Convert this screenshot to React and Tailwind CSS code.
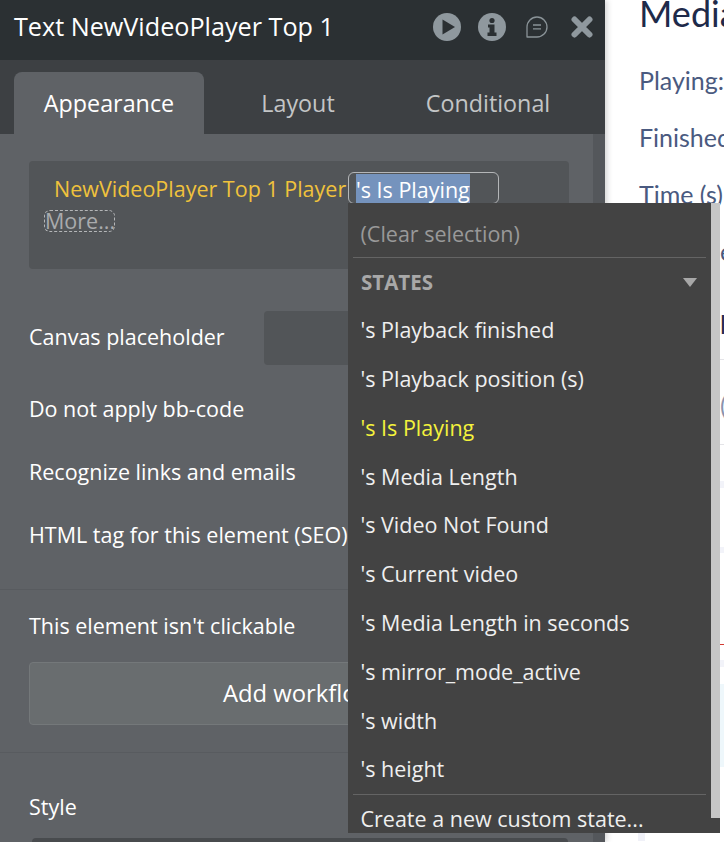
import React from "react";

const STATES = [
  "'s Playback finished",
  "'s Playback position (s)",
  "'s Is Playing",
  "'s Media Length",
  "'s Video Not Found",
  "'s Current video",
  "'s Media Length in seconds",
  "'s mirror_mode_active",
  "'s width",
  "'s height",
];

function HeaderIcons() {
  return (
    <div className="flex items-center">
      {/* play */}
      <svg width="28" height="28" viewBox="0 0 28 28">
        <circle cx="14" cy="14" r="14" fill="#8f989e" />
        <path d="M9.5 6.5 L22 14 L9.5 21.5 Z" fill="#2b3033" />
      </svg>
      {/* info */}
      <svg width="28" height="28" viewBox="0 0 28 28" className="ml-[17px]">
        <circle cx="14" cy="14" r="14" fill="#8f989e" />
        <circle cx="14" cy="7.5" r="2.6" fill="#2b3033" />
        <path d="M10 11.5 H16.5 V19.5 H18.5 V23 H9.5 V19.5 H11.5 V14.5 H10 Z" fill="#2b3033" />
      </svg>
      {/* comment */}
      <svg width="22" height="22" viewBox="0 0 22 22" className="ml-[20px]" fill="none">
        <path
          d="M1 21 V11 A10 10 0 1 1 11 21 Z"
          stroke="#8a9398"
          strokeWidth="1.3"
          strokeLinejoin="round"
        />
        <path d="M7 9 H15 M7 12.8 H15" stroke="#8a9398" strokeWidth="1.3" />
      </svg>
      {/* close */}
      <svg width="22" height="22" viewBox="0 0 22 22" className="ml-[23px]">
        <path d="M3.5 3.5 L18.5 18.5 M18.5 3.5 L3.5 18.5" stroke="#8f989e" strokeWidth="6" strokeLinecap="round" />
      </svg>
    </div>
  );
}

function Row({ label }) {
  return <div className="h-[63px] flex items-center pl-[29px] text-white whitespace-nowrap">{label}</div>;
}

function Panel() {
  return (
    <div className="relative z-10 w-[605px] h-[842px] shrink-0 flex flex-col bg-[#5f6266] shadow-[2px_0_6px_rgba(0,0,0,0.18)] overflow-hidden">
      {/* HEADER */}
      <div className="h-[60px] shrink-0 bg-[#2b3033] flex items-center justify-between pl-[14px] pr-[12px] pb-[6px]">
        <div className="text-[25.2px] text-white whitespace-nowrap">Text NewVideoPlayer Top 1</div>
        <HeaderIcons />
      </div>

      {/* TABS */}
      <div className="h-[74px] shrink-0 bg-[#3d4043] flex items-end pl-[14px] text-[23.3px]">
        <div className="w-[190px] h-[62px] bg-[#5f6266] rounded-t-lg flex items-center justify-center text-white">
          Appearance
        </div>
        <div className="w-[188px] h-[62px] flex items-center justify-center text-[#c3c5c6]">Layout</div>
        <div className="w-[192px] h-[62px] flex items-center justify-center text-[#c3c5c6]">Conditional</div>
      </div>

      {/* BODY */}
      <div className="flex-1 flex min-h-0">
        <div className="w-[593px] shrink-0 pt-[27px]">
          <div className="ml-[29px] w-[540px] h-[108px] bg-[#525558] rounded-sm pl-[15px] pt-[11px]">
            <div className="flex h-[32px]">
              <span className="w-[304px] pl-[10px] text-[#f0c23c] leading-[34px] whitespace-nowrap">
                NewVideoPlayer Top 1 Player
              </span>
              <div className="w-[151px] h-[32px] border border-[#b4b6b8] rounded-md pl-[7px] pt-[1px]">
                <span className="block w-[114px] h-[30px] bg-[#7593bd] text-white leading-[32px] whitespace-nowrap">
                  's Is Playing
                </span>
              </div>
            </div>
            <div className="mt-[6px] w-[71px] h-[22px] border border-dashed border-[#b4b6b8] rounded-md text-[#a9abad] leading-[20px] whitespace-nowrap">
              More...
            </div>
          </div>

          <div className="mt-[42px] h-[54px] flex items-center pl-[29px] text-white">
            <span className="w-[235px] pb-[2px] whitespace-nowrap">Canvas placeholder</span>
            <div className="w-[305px] h-[54px] bg-[#525558] rounded-sm" />
          </div>

          <div className="mt-[13px]">
            <Row label="Do not apply bb-code" />
            <Row label="Recognize links and emails" />
            <Row label="HTML tag for this element (SEO)" />
          </div>
        </div>
        <div className="w-[12px] shrink-0 bg-[#54575b]" />
      </div>
    </div>
  );
}

function LowerPanel() {
  return (
    <div className="absolute left-0 top-[589px] z-10 w-[593px] h-[253px] overflow-hidden">
      <div className="h-px bg-[#585b5f]" />
      <div className="mt-[18px] h-[36px] flex items-center pl-[29px] text-white whitespace-nowrap">
        This element isn't clickable
      </div>
      <div className="mt-[18px] ml-[29px] w-[540px] h-[63px] bg-[#696d6f] border border-[#74787a] rounded-sm flex items-center justify-center text-[23.8px] text-white whitespace-nowrap">
        Add workflow
      </div>
      <div className="mt-[27px] h-px bg-[#585b5f]" />
      <div className="mt-[36px] h-[36px] flex items-center pl-[29px] text-white">Style</div>
      <div className="mt-[13px] ml-[32px] w-[536px] h-[10px] bg-[#484b4e] rounded-t-sm" />
    </div>
  );
}

function Dropdown() {
  return (
    <div className="absolute left-[348px] top-[203px] z-20 w-[372px] h-[630px] bg-[#434343] overflow-hidden">
      <div className="w-[363px] pl-[5px] pr-[5px]">
        <div className="h-[54px] pl-[7.5px] pt-[8px] flex items-center text-[#999999] whitespace-nowrap">(Clear selection)</div>
        <div className="h-px bg-[#646464]" />
        <div className="h-[48px] pl-[8px] pr-[9px] flex items-center justify-between">
          <span className="font-bold text-[20.5px] text-[#a8a8a8]">STATES</span>
          <span className="w-0 h-0 border-x-[7.5px] border-x-transparent border-t-[9px] border-t-[#a8a8a8]" />
        </div>
        {STATES.map((name) => (
          <div
            key={name}
            className={`h-[48.8px] pl-[7.5px] flex items-center whitespace-nowrap ${
              name === "'s Is Playing" ? "text-[#f4f23c]" : "text-[#efefef]"
            }`}
          >
            {name}
          </div>
        ))}
        <div className="h-px bg-[#646464]" />
        <div className="h-[49px] pl-[7.5px] flex items-center text-[#efefef] whitespace-nowrap">
          Create a new custom state...
        </div>
      </div>
      {/* SCROLLBAR */}
      <div className="absolute right-0 top-0 w-[9px] h-[615px] bg-[#c6c6c6]" />
    </div>
  );
}

function Page() {
  return (
    <div className="flex-1 min-w-0 h-[842px] bg-white overflow-hidden font-['Lato',sans-serif]">
      <div className="h-[50px] pl-[34px] text-[36px] leading-[26px] text-[#1e2a4a] whitespace-nowrap">Media</div>
      <div className="h-[57px] pl-[34px] text-[25px] leading-[60px] text-[#4a5a80] whitespace-nowrap">Playing:</div>
      <div className="h-[57px] pl-[34px] text-[25px] leading-[60px] text-[#4a5a80] whitespace-nowrap">Finished</div>
      <div className="h-[57px] pl-[34px] text-[25px] leading-[60px] text-[#4a5a80] whitespace-nowrap">Time (s)</div>
      <div className="h-[60px] pl-[115px] text-[25px] leading-[60px] text-[#4a5a80]">e</div>
      <div className="h-[78px] pl-[115px] text-[25px] leading-[86px] text-[#1e2a4a]">l</div>
      <div className="h-px bg-[#e4e4e8]" />
      <div className="h-[84px] pl-[115px] text-[25px] leading-[90px] text-[#8a93ad]">(</div>
      <div className="h-px bg-[#e4e4e8]" />
      <div className="h-[36px]" />
      <div className="h-[7px] bg-[#f2f3f9]" />
      <div className="h-[59px]" />
      <div className="h-[6px] bg-[#f2f3f9]" />
      <div className="h-[91px]" />
      <div className="h-px bg-[#d43a32]" />
      <div className="h-[15px]" />
      <div className="h-[7px] bg-[#f2f3f9]" />
      <div className="h-[17px]" />
      <div className="h-[83px] bg-[#eef7fb]" />
      <div className="h-[65px]" />
      <div className="ml-[33px] w-[7px] h-[9px] bg-[#f0f1f8]" />
    </div>
  );
}

export default function App() {
  return (
    <div className="relative w-[724px] h-[842px] overflow-hidden flex text-[21.5px] font-['Open_Sans',sans-serif]">
      <Panel />
      <Page />
      <LowerPanel />
      <Dropdown />
    </div>
  );
}
